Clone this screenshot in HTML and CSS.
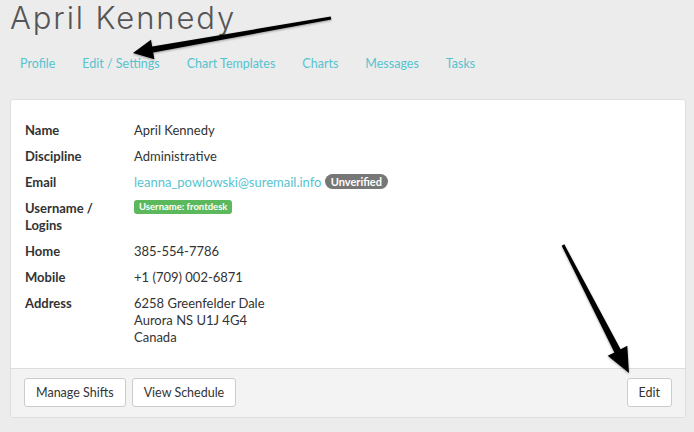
FILE: index.html
```html
<html lang="en">

<head>
	<title>April Kennedy</title>
	<meta http-equiv="Content-Type" content="text/html; charset=UTF-8">
	<meta name="viewport" content="width=device-width,initial-scale=1">
	<link rel="stylesheet" href="styles.css">
</head>

<body>
	<div class="page">
		<h1 class="title">April Kennedy</h1>
		<nav class="tabs">
			<a href="#">Profile</a>
			<a href="#">Edit / Settings</a>
			<a href="#">Chart Templates</a>
			<a href="#">Charts</a>
			<a href="#">Messages</a>
			<a href="#">Tasks</a>
		</nav>
		<div class="panel">
			<div class="panel-body">
				<div class="row">
					<div class="label">Name</div>
					<div class="value">April Kennedy</div>
				</div>
				<div class="row">
					<div class="label">Discipline</div>
					<div class="value">Administrative</div>
				</div>
				<div class="row">
					<div class="label">Email</div>
					<div class="value"><a href="#">leanna_powlowski@suremail.info</a> <span class="badge">Unverified</span></div>
				</div>
				<div class="row">
					<div class="label">Username /<br>Logins</div>
					<div class="value"><span class="tag">Username: frontdesk</span></div>
				</div>
				<div class="row">
					<div class="label">Home</div>
					<div class="value">385-554-7786</div>
				</div>
				<div class="row">
					<div class="label">Mobile</div>
					<div class="value">+1 (709) 002-6871</div>
				</div>
				<div class="row">
					<div class="label">Address</div>
					<div class="value">6258 Greenfelder Dale<br>Aurora NS U1J 4G4<br>Canada</div>
				</div>
			</div>
			<div class="panel-footer">
				<div class="btn-group">
					<button class="btn">Manage Shifts</button>
					<button class="btn">View Schedule</button>
				</div>
				<button class="btn">Edit</button>
			</div>
		</div>
	</div>
	<svg class="arrows" width="694" height="432" viewBox="0 0 694 432">
		<polygon points="330.7,16.5 331.3,19.5 153.2,52.5 154.4,59.3 133,53 151,39.7 152.2,46.5" />
		<polygon points="564.3,244.3 620.6,349.2 627.3,345.8 629,373 607.7,355.8 614.4,352.4 561.7,245.7" />
	</svg>
</body>

</html>
```

FILE: styles.css
```css
body {
	font-family: Lato, "Open Sans", sans-serif;
	background: #ececec;
	color: #333;
	margin: 0;
	padding: 0;
	position: relative;
}

.page {
	padding: 0 8px 0 10px;
}

.title {
	font-family: Inter, Lato, sans-serif;
	font-size: 31px;
	font-weight: 300;
	letter-spacing: 1.9px;
	line-height: 36px;
	color: #555;
	margin: 0;
}

.tabs {
	display: flex;
	gap: 27px;
	margin-top: 18px;
	padding-left: 10px;
	line-height: 20px;
	font-size: 12.5px;
}

.tabs a {
	color: #56c3cf;
	text-decoration: none;
}

.panel {
	margin-top: 25px;
	background: #fff;
	border: 1px solid #ddd;
	border-radius: 3px;
}

.panel-body {
	padding: 22px 14px 22px;
	font-size: 13px;
	line-height: 17px;
}

.row {
	display: flex;
	margin-bottom: 9px;
}

.row:last-child {
	margin-bottom: 0;
}

.label {
	width: 109px;
	font-weight: 700;
	color: #333;
}

.value {
	color: #333;
}

.value a {
	color: #56c3cf;
	text-decoration: none;
}

.badge {
	display: inline-block;
	background: #777;
	color: #fff;
	font-size: 11px;
	font-weight: 700;
	line-height: 15px;
	padding: 0 6px;
	border-radius: 8px;
	vertical-align: 1px;
}

.tag {
	display: inline-block;
	background: #5cb85c;
	color: #fff;
	font-size: 9.5px;
	font-weight: 700;
	line-height: 14px;
	padding: 0 5px;
	border-radius: 3px;
	vertical-align: -2px;
}

.panel-footer {
	display: flex;
	justify-content: space-between;
	background: #f3f3f3;
	border-top: 1px solid #ddd;
	padding: 9px 13px 10px;
	border-radius: 0 0 3px 3px;
}

.btn-group {
	display: flex;
	gap: 6px;
}

.btn {
	font-family: Lato, "Open Sans", sans-serif;
	font-size: 12.5px;
	color: #333;
	height: 29px;
	padding: 0 11px;
	background: #fff;
	border: 1px solid #ccc;
	border-radius: 3px;
}

.arrows {
	position: absolute;
	top: 0;
	left: 0;
	pointer-events: none;
	fill: #000;
	filter: drop-shadow(0 1px 1px rgba(0, 0, 0, 0.35));
}
```
